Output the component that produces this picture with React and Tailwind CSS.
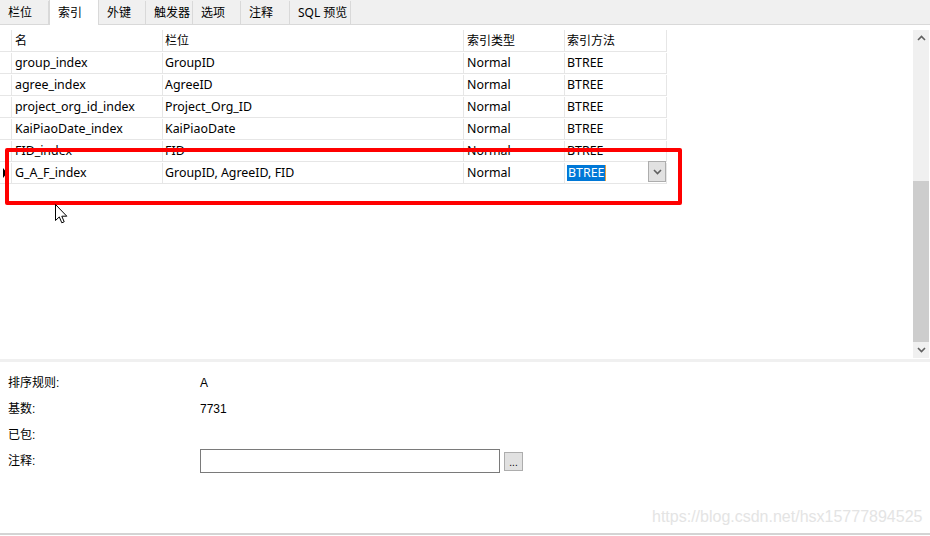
const tabs = [
  { label: "栏位", w: "w-[49px]" },
  { label: "索引", w: "w-[50px]", active: true },
  { label: "外键", w: "w-[47px]" },
  { label: "触发器", w: "w-[47px]" },
  { label: "选项", w: "w-[48px]" },
  { label: "注释", w: "w-[49px]" },
  { label: "SQL 预览", w: "w-[61px]" },
];

const rows = [
  ["group_index", "GroupID"],
  ["agree_index", "AgreeID"],
  ["project_org_id_index", "Project_Org_ID"],
  ["KaiPiaoDate_index", "KaiPiaoDate"],
  ["FID_index", "FID"],
  ["G_A_F_index", "GroupID, AgreeID, FID"],
];

function Chevron({ up }) {
  return (
    <svg width="9" height="6" viewBox="0 0 9 6">
      <path
        d={up ? "M1 5 L4.5 1.5 L8 5" : "M1 1 L4.5 4.5 L8 1"}
        fill="none"
        stroke="#606060"
        strokeWidth="1.6"
      />
    </svg>
  );
}

function Row({ cells, header, current, editing }) {
  const h = header ? "text-[12px]" : "text-[12.4px] pt-[1px]";
  return (
    <div className={`flex h-[22px] border-b border-[#e6e6e6] ${h}`}>
      <div className="w-[12px] border-r border-[#e6e6e6] flex items-center pl-[3px]">
        {current && (
          <svg width="4" height="10" viewBox="0 0 4 10">
            <path d="M0 0 L4 5 L0 10 Z" fill="#000" />
          </svg>
        )}
      </div>
      <div className="w-[151px] border-r border-[#e6e6e6] pl-[3px] flex items-center">{cells[0]}</div>
      <div className="w-[301px] border-r border-[#e6e6e6] pl-[2px] flex items-center">{cells[1]}</div>
      <div className="w-[101px] border-r border-[#e6e6e6] pl-[3px] flex items-center">{cells[2]}</div>
      <div className="w-[102px] border-r border-[#e6e6e6] pl-[2px] flex items-center relative">
        {editing ? (
          <>
            <span className="bg-[#0078d7] text-white leading-[16px] px-[1px] border-r border-[#e8a040]">
              {cells[3]}
            </span>
            <div className="absolute right-0 top-[-2px] w-[18px] h-[21px] bg-[#e1e1e1] border border-[#adadad] flex items-center justify-center">
              <Chevron />
            </div>
          </>
        ) : (
          cells[3]
        )}
      </div>
    </div>
  );
}

export default function App() {
  return (
    <div className="w-[930px] h-[536px] relative overflow-hidden bg-white text-black font-['Noto_Sans','Noto_Sans_CJK_SC',sans-serif]">
      {/* tab strip */}
      <div className="h-[25px] bg-[#f0f0f0] border-b border-[#d9d9d9] flex items-end text-[12px]">
        {tabs.map((t) => (
          <div
            key={t.label}
            className={
              t.active
                ? `${t.w} h-[25px] -mb-px bg-white border-x border-[#d9d9d9] flex items-center pl-[8px]`
                : `${t.w} h-[23px] border-r border-[#d9d9d9] flex items-center pl-[8px]`
            }
          >
            {t.label}
          </div>
        ))}
      </div>

      {/* grid + scrollbar */}
      <div className="h-[334px] flex">
        <div className="flex-1 pt-[5px]">
          <div className="w-[667px]">
            <Row header cells={["名", "栏位", "索引类型", "索引方法"]} />
            {rows.map((r, i) => (
              <Row
                key={r[0]}
                cells={[r[0], r[1], "Normal", "BTREE"]}
                current={i === rows.length - 1}
                editing={i === rows.length - 1}
              />
            ))}
          </div>
        </div>
        <div className="w-[16px] mr-[1px] mt-[5px] h-[328px] bg-[#f0f0f0] flex flex-col">
          <div className="h-[16px] flex items-center justify-center">
            <Chevron up />
          </div>
          <div className="h-[135px]" />
          <div className="h-[161px] bg-[#cdcdcd]" />
          <div className="h-[16px] flex items-center justify-center">
            <Chevron />
          </div>
        </div>
      </div>

      <div className="h-[3px] bg-[#f0f0f0]" />

      {/* properties */}
      <div className="h-[173px] border-b-2 border-[#d4d4d4] pt-[8px] font-['Liberation_Sans','Noto_Sans_CJK_SC',sans-serif] text-[12px]">
        <div className="grid grid-cols-[192px_1fr] pl-[8px] auto-rows-[26px] items-center">
          <div>排序规则:</div>
          <div>A</div>
          <div>基数:</div>
          <div>7731</div>
          <div>已包:</div>
          <div />
          <div>注释:</div>
          <div className="flex items-center gap-[4px]">
            <div className="w-[300px] h-[24px] border border-[#7a7a7a] bg-white" />
            <div className="w-[19px] h-[19px] bg-[#e1e1e1] border border-[#adadad] flex items-end justify-center text-[10px] leading-[14px]">
              ...
            </div>
          </div>
        </div>
      </div>

      {/* watermark */}
      <div className="absolute left-[652px] top-[507px] text-[16px] leading-[19px] text-[#e4e4e4] font-['Liberation_Sans',sans-serif]">
        https://blog.csdn.net/hsx15777894525
      </div>

      {/* red annotation box */}
      <div className="absolute left-[5px] top-[148px] w-[677px] h-[57px] border-4 border-[#ff0000] rounded-[2px]" />

      {/* mouse pointer */}
      <svg className="absolute left-[55px] top-[204px]" width="13" height="20" viewBox="0 0 13 20">
        <path
          d="M0.5 0.5 L0.5 16.5 L4.3 12.9 L6.8 18.8 L9.2 17.8 L6.8 12.2 L11.8 12.2 Z"
          fill="#fff"
          stroke="#000"
          strokeWidth="1"
          strokeLinejoin="round"
        />
      </svg>
    </div>
  );
}
